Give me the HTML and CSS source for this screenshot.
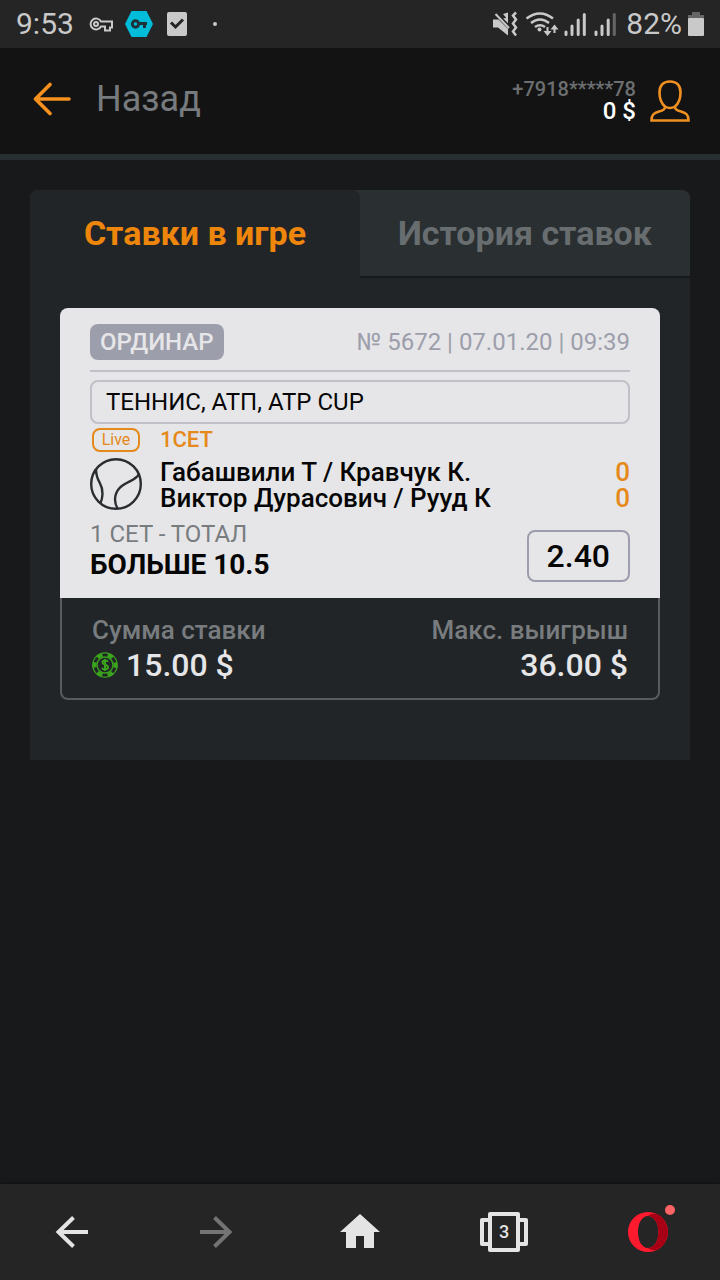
FILE: index.html
```
<!DOCTYPE html>
<html lang="ru">
<head>
<meta charset="utf-8">
<meta name="viewport" content="width=device-width, initial-scale=1">
<title>Ставки в игре</title>
<link rel="stylesheet" href="styles.css">
</head>
<body>
<div class="status">
  <span class="status-text">9:53</span>
  <svg class="status-left" viewBox="88 0 136 48" width="136" height="48" aria-hidden="true">
    <g fill="none" stroke="#c9c9c9" stroke-width="2">
      <path d="M101 21.500H112V27.500h-2v3h-5V26.500h-4A5.500 5.500 0 1 1 101 21.500Z"/>
      <circle cx="96" cy="24" r="2"/>
    </g>
    <path d="M131.500 11h15L153 24l-6.500 13h-15L125 24Z" fill="#00bcd9"/>
    <g fill="none" stroke="#1c3238" stroke-width="3">
      <circle cx="135.500" cy="24" r="3.200"/>
      <path d="M138.500 23.500h8.500M144.500 24v4"/>
    </g>
    <rect x="167" y="12" width="20" height="24" rx="2" fill="#c9c9c9"/>
    <path d="M171 22.500l4.500 4.500 7.500-7.500" fill="none" stroke="#252525" stroke-width="3"/>
    <circle cx="215" cy="24" r="2" fill="#c9c9c9"/>
  </svg>
  <svg class="status-right" viewBox="492 0 126 48" width="126" height="48" aria-hidden="true">
    <path d="M493 19.500h5l10-2V35.500l-10-8h-5ZM503 14l5-1.500V20Z" fill="#c9c9c9"/>
    <path d="M495 13l14 14" stroke="#252525" stroke-width="4"/>
    <path d="M495.500 14L509 28" stroke="#c9c9c9" stroke-width="2"/>
    <path d="M516 12.500l-3 3 3 4-3 4 3 4-3 4 3 4" fill="none" stroke="#c9c9c9" stroke-width="2.500"/>
    <g fill="none" stroke="#c9c9c9" stroke-width="2.600">
      <path d="M526.500 18.500Q540 8.500 553 18.500M531 23Q540 16 549 23M535 27Q540 23.500 545 27"/>
      <path d="M547.500 27v7M554.500 33v-7" stroke-width="2"/>
    </g>
    <circle cx="539.500" cy="29.500" r="2" fill="#c9c9c9"/>
    <path d="M543.500 31h8l-4 5ZM550.500 29.500h8l-4-5Z" fill="#c9c9c9"/>
    <g stroke="#c9c9c9" stroke-width="3" stroke-linecap="round">
      <path d="M566 32v2.500M572 26v8.500M578.200 20v14.500M584.300 14.500v20M596 32v2.500M602 26v8.500M608.200 20v14.500"/>
      <path d="M614.300 14.500v20" stroke="#666"/>
    </g>
  </svg>
  <span class="status-text">82%</span>
  <svg viewBox="0 0 16 48" width="16" height="48" aria-hidden="true">
    <path d="M0 18v-3h4v-3h8v3h4v3Z" fill="#666"/>
    <rect y="18" width="16" height="18" rx="1" fill="#c9c9c9"/>
  </svg>
</div>

<header class="header">
  <a class="back" href="#back">
    <svg viewBox="0 0 38 34" width="38" height="34" aria-hidden="true"><path d="M17 2.500L2.500 17 17 31.500M3 17h33" fill="none" stroke="#f6901e" stroke-width="3.600" stroke-linecap="round" stroke-linejoin="round"/></svg>
    Назад
  </a>
  <a class="account" href="#account">
    <span class="account-text"><span class="phone">+7918*****78</span><span class="balance">0 $</span></span>
    <svg viewBox="0 0 40 42" width="40" height="42" aria-hidden="true"><path d="M20 1.500C12.500 1.500 9.500 6 9.500 12.500C9.500 19 12 24 15 26.500C15 29.500 13.500 30.500 9 31.500C3.500 33 1.500 35 1.500 40.500H38.500C38.500 35 36.500 33 31 31.500C26.500 30.500 25 29.500 25 26.500C28 24 30.500 19 30.500 12.500C30.500 6 27.500 1.500 20 1.500ZM15 26.500Q20 29.500 25 26.500" fill="none" stroke="#f09020" stroke-width="2.600"/></svg>
  </a>
</header>

<main class="main">
  <section class="panel">
    <nav class="tabs">
      <a class="tab tab-active" href="#active" aria-current="page">Ставки в игре</a>
      <a class="tab tab-idle" href="#history">История ставок</a>
    </nav>
    <article class="bet">
      <div class="bet-body">
        <div class="bet-head">
          <span class="kind">ОРДИНАР</span>
          <span class="number">№ 5672 | 07.01.20 | 09:39</span>
        </div>
        <div class="league">ТЕННИС, АТП, ATP CUP</div>
        <div class="period"><span class="live">Live</span><span>1СЕТ</span></div>
        <div class="match">
          <svg viewBox="0 0 52 52" width="52" height="52" aria-hidden="true"><g fill="none" stroke="#2a2e31" stroke-width="2.400"><circle cx="26" cy="26" r="24.800"/><path d="M6 11C6 25 13 24 12.500 36C12.300 40 11.500 43 10.500 45M49 16C45 25 26 24 25 41C25 45 26 48 27.500 50.500"/></g></svg>
          <div class="teams"><span>Габашвили Т / Кравчук К.</span><span>Виктор Дурасович / Рууд К</span></div>
          <div class="score"><span>0</span><span>0</span></div>
        </div>
        <div class="outcome">
          <div><div class="market">1 СЕТ - ТОТАЛ</div><div class="pick">БОЛЬШЕ 10.5</div></div>
          <span class="odds">2.40</span>
        </div>
      </div>
      <div class="bet-foot">
        <div>
          <div class="label">Сумма ставки</div>
          <div class="sum">
            <svg viewBox="0 0 26 26" width="26" height="26" aria-hidden="true"><g fill="none" stroke="#3aa51c"><circle cx="13" cy="13" r="12.200" stroke-width="1.200"/><circle cx="13" cy="13" r="10.500" stroke-width="4" stroke-dasharray="5.500 5.500" stroke-dashoffset="2.700" pathLength="66"/><circle cx="13" cy="13" r="8" stroke-width="1.400"/><path d="M16 9.800C15 8 10.500 8 10.500 10.500C10.500 13 16 12.500 16 15.300C16 18 11 18 10 16M13 7v12" stroke-width="2"/></g></svg>
            <span>15.00 $</span>
          </div>
        </div>
        <div class="win">
          <div class="label">Макс. выигрыш</div>
          <div class="sum">36.00 $</div>
        </div>
      </div>
    </article>
  </section>
</main>

<nav class="toolbar">
  <button type="button" aria-label="Назад"><svg viewBox="0 0 48 48" width="48" height="48"><path d="M25.500 9.500L10.500 24l15 14.500M11 24h29" fill="none" stroke="#e4e4e4" stroke-width="4"/></svg></button>
  <button type="button" aria-label="Вперёд"><svg viewBox="0 0 48 48" width="48" height="48"><path d="M22.500 9.500L37.500 24l-15 14.500M37 24H8" fill="none" stroke="#747474" stroke-width="4"/></svg></button>
  <button type="button" aria-label="Домой"><svg viewBox="0 0 48 48" width="48" height="48"><path d="M24 6L44 24H38v16H28V28h-8v12H10V24H4Z" fill="#e4e4e4"/></svg></button>
  <button type="button" class="tabs-button" aria-label="Вкладки: 3"><svg viewBox="0 0 48 48" width="48" height="48"><g fill="none" stroke="#e4e4e4" stroke-width="4" stroke-linejoin="round"><path d="M10 6h28v36H10ZM10 12H2v24h8M38 12h8v24h-8"/></g></svg><span class="tabs-count">3</span></button>
  <button type="button" aria-label="Меню Opera"><svg viewBox="0 0 48 48" width="48" height="48" overflow="visible"><path d="M24 4a20 20 0 1 0 0 40a20 20 0 1 0 0-40ZM24 8c6 0 10.500 7 10.500 16s-4.500 16-10.500 16S14 33 14 24 18 8 24 8Z" fill="#ff1b2d" fill-rule="evenodd"/><path d="M24 8c3-2.500 7-3 11-.7A20 20 0 0 1 35 40.700c-4 2.300-8 1.800-11-.7 6 0 10.500-7 10.500-16S30 8 24 8Z" fill="#a70014"/><circle cx="46" cy="2" r="5" fill="#ff6363"/></svg></button>
</nav>
</body>
</html>
```
FILE: styles.css
```
* { box-sizing: border-box; }
body {
  margin: 0;
  min-height: 100vh;
  display: flex;
  flex-direction: column;
  background: #18191a;
  font-family: Roboto, "Noto Sans", sans-serif;
  font-weight: 400;
}
a { color: inherit; text-decoration: none; }
svg { display: block; flex: none; }

.status {
  display: flex;
  align-items: center;
  height: 48px;
  padding: 0 16px;
  background: #252525;
  color: #c9c9c9;
}
.status-text { font-size: 30px; line-height: 50px; }
.status-left { margin-left: 14px; }
.status-right { margin: 0 8px 0 auto; }
.status-text + svg:last-child { margin-left: 6px; }

.header {
  display: flex;
  align-items: center;
  justify-content: space-between;
  height: 112px;
  padding: 0 30px 4px 33px;
  background: #131313;
  border-bottom: 6px solid #272e30;
}
.back {
  display: flex;
  align-items: center;
  gap: 25px;
  color: #777b7e;
  font-size: 36px;
  line-height: 44px;
}
.account { display: flex; align-items: center; gap: 14px; padding-top: 4px; }
.account-text { display: flex; flex-direction: column; text-align: right; }
.phone { color: #6c6f71; font-size: 20px; font-weight: 500; line-height: 20px; }
.balance { color: #fff; font-size: 24px; font-weight: 500; line-height: 24px; }

.main { flex: 1; padding: 30px; }
.panel { padding-bottom: 60px; background: #212527; border-radius: 8px 8px 0 0; }
.tabs {
  display: grid;
  grid-template-columns: 1fr 1fr;
  background: #2a2f32;
  border-radius: 8px 8px 0 0;
}
.tab {
  height: 88px;
  text-align: center;
  font-size: 34px;
  font-weight: 700;
  line-height: 86px;
  border-radius: 8px 8px 0 0;
}
.tab-active { color: #ee860c; background: #212527; }
.tab-idle { color: #686d70; border-bottom: 2px solid #171a1b; border-radius: 0; }

.bet { margin: 30px 30px 0; }
.bet-body {
  padding: 16px 30px;
  background: #e6e6e8;
  color: #060606;
  border-radius: 8px 8px 0 0;
}
.bet-head {
  display: flex;
  align-items: center;
  justify-content: space-between;
  padding-bottom: 10px;
  border-bottom: 2px solid #bfc0c8;
  font-size: 24px;
  line-height: 36px;
}
.kind {
  padding: 0 10px;
  background: #9d9eab;
  color: #e6e6e8;
  font-weight: 500;
  border-radius: 8px;
}
.number { color: #9d9eab; }
.league {
  margin-top: 8px;
  padding: 0 14px;
  border: 2px solid #bfc0c8;
  border-radius: 8px;
  font-size: 24px;
  line-height: 40px;
}
.period {
  display: flex;
  align-items: center;
  gap: 20px;
  margin-top: 2px;
  padding-left: 2px;
  color: #e5891b;
  font-size: 22px;
  font-weight: 500;
  line-height: 28px;
}
.live {
  width: 48px;
  border: 2px solid #e5891b;
  border-radius: 8px;
  text-align: center;
  font-size: 16px;
  font-weight: 400;
  line-height: 20px;
}
.match {
  display: flex;
  gap: 18px;
  margin-top: 4px;
  font-size: 26px;
  font-weight: 500;
  line-height: 26px;
}
.teams, .score { display: flex; flex-direction: column; padding-top: 1px; }
.score { margin-left: auto; color: #e5891b; }
.outcome {
  display: flex;
  align-items: flex-end;
  justify-content: space-between;
  margin-top: 9px;
}
.market { color: #787c7f; font-size: 24px; line-height: 28px; }
.pick { font-size: 28px; font-weight: 700; line-height: 34px; }
.odds {
  padding: 0 18px;
  border: 2px solid #9d9eab;
  border-radius: 8px;
  font-size: 32px;
  font-weight: 500;
  line-height: 48px;
}
.bet-foot {
  display: flex;
  justify-content: space-between;
  padding: 16px 30px 14px;
  border: 2px solid #5a5b5c;
  border-top: 0;
  border-radius: 0 0 8px 8px;
  color: #e6e6e8;
  font-weight: 500;
}
.label { color: #787c7f; font-size: 26px; line-height: 32px; }
.sum {
  display: flex;
  align-items: center;
  gap: 8px;
  font-size: 32px;
  line-height: 38px;
}
.win .sum { justify-content: flex-end; }

.toolbar {
  display: grid;
  grid-template-columns: repeat(5, 1fr);
  height: 96px;
  background: #252525;
  box-shadow: 0 0 4px #0c0c0c;
}
.toolbar button {
  display: grid;
  place-items: center;
  padding: 0;
  border: 0;
  background: none;
}
.toolbar svg, .tabs-count { grid-area: 1 / 1; }
.tabs-count {
  color: #e4e4e4;
  font: 500 18px/20px Roboto, sans-serif;
}
```
